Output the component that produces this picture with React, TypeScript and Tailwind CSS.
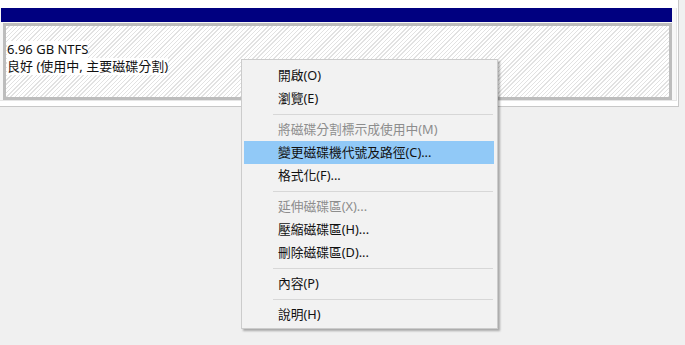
import React from 'react';

type Item = { label: string; disabled?: boolean; active?: boolean } | 'sep';

const menu: Item[] = [
  { label: '開啟(O)' },
  { label: '瀏覽(E)' },
  'sep',
  { label: '將磁碟分割標示成使用中(M)', disabled: true },
  { label: '變更磁碟機代號及路徑(C)...', active: true },
  { label: '格式化(F)...' },
  'sep',
  { label: '延伸磁碟區(X)...', disabled: true },
  { label: '壓縮磁碟區(H)...' },
  { label: '刪除磁碟區(D)...' },
  'sep',
  { label: '內容(P)' },
  'sep',
  { label: '說明(H)' },
];

function ContextMenu() {
  return (
    <div className="absolute left-[241px] top-[59px] w-[257px] border border-[#cccccc] bg-[#f2f2f2] pb-[2px] pl-[2px] pr-[3px] pt-[4px] shadow-[2px_2px_2px_rgba(0,0,0,0.3)]">
      {menu.map((item, i) =>
        item === 'sep' ? (
          <div key={i} className="flex h-[8px] items-center pl-[29px] pr-[1px]">
            <div className="h-px w-full bg-[#d7d7d7]" />
          </div>
        ) : (
          <div
            key={i}
            className={`flex h-[23px] items-center pl-[34px] pt-px text-[12.75px] ${
              item.active ? 'bg-[#91c9f7]' : ''
            } ${item.disabled ? 'text-[#8d8d8d]' : 'text-[#111111]'}`}>
            {item.label}
          </div>
        ),
      )}
    </div>
  );
}

export default function App() {
  return (
    <div className="relative h-[345px] w-[685px] overflow-hidden bg-[#f0f0f0] font-['Noto_Sans','Noto_Sans_CJK_TC',sans-serif]">
      <div className="w-[679px] border-b border-r border-[#c8c8c8] bg-[#ffffff] pb-[2px] pt-[8px]">
        <div className="mb-[3px] mr-[1px] w-[677px] border-b border-r border-[#e6e6e6] bg-[#f7f7f7]">
          <div className="ml-[1px] h-[14px] w-[671px] bg-[#000080]" />
          <div className="ml-[3px] mt-px h-[77px] w-[669px] border-[3px] border-[#bdbdbd] bg-[repeating-linear-gradient(135deg,#ffffff_0px,#ffffff_2px,#e2e2e2_2px,#e2e2e2_3px)]">
            <div className="flex flex-col items-start pl-[1px] pt-[15px] text-[13px] leading-[17px] text-[#111111]">
              <span className="bg-white">6.96 GB NTFS</span>
              <span className="bg-white">良好 (使用中, 主要磁碟分割)</span>
            </div>
          </div>
        </div>
      </div>
      <ContextMenu />
    </div>
  );
}
